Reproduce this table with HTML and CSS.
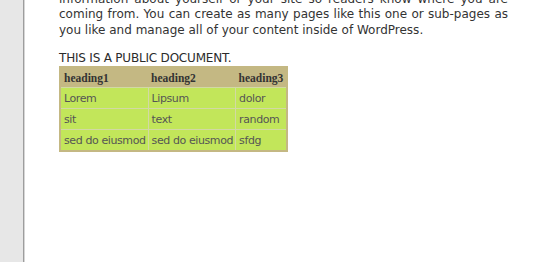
FILE: index.html
```html
<!DOCTYPE html>
<html>
<head>
	<title>Public document</title>
	<link rel="stylesheet" href="styles.css">
</head>
<body>
	<div class="sidebar"></div>
	<div class="content">
		<p class="intro">This is an example of a WordPress page, you could edit this to put information about yourself or your site so readers know where you are coming from. You can create as many pages like this one or sub-pages as you like and manage all of your content inside of WordPress.</p>
		<p class="notice">THIS IS A PUBLIC DOCUMENT.</p>
		<table class="data">
			<tr>
				<th>heading1</th>
				<th>heading2</th>
				<th>heading3</th>
			</tr>
			<tr>
				<td>Lorem</td>
				<td>Lipsum</td>
				<td>dolor</td>
			</tr>
			<tr>
				<td>sit</td>
				<td>text</td>
				<td>random</td>
			</tr>
			<tr>
				<td>sed do eiusmod</td>
				<td>sed do eiusmod</td>
				<td>sfdg</td>
			</tr>
		</table>
	</div>
</body>
</html>
```

FILE: styles.css
```css
html, body {
	height: 100%;
}
body {
	margin: 0;
	display: flex;
	background-color: #fff;
	font-family: "DejaVu Sans", Verdana, sans-serif;
	color: #333;
	overflow: hidden;
}
.sidebar {
	width: 23px;
	flex-shrink: 0;
	background-color: #e7e7e7;
	border-right: 1px solid #9d9d9d;
	box-shadow: 1px 0 0 #d6d6d6;
}
.content {
	width: 449px;
	padding-left: 35px;
	margin-top: -24px;
}
.intro {
	margin: 0 0 13px;
	font-size: 12px;
	line-height: 15.5px;
	text-align: justify;
}
.notice {
	margin: 0;
	font-size: 12px;
	line-height: 15px;
	letter-spacing: -0.2px;
	color: #2b2b2b;
}

/* tabla */
.data {
	border: 2px solid #c4b883;
	border-collapse: collapse;
	background-color: #c4b883;
	font-size: 11px;
}
.data th {
	font-family: "Liberation Serif", Georgia, serif;
	font-size: 11.5px;
	font-weight: bold;
	text-align: left;
	color: #333;
	height: 19px;
	padding: 0 3px 0 3px;
}
.data td {
	background-color: #c2e65a;
	border: 1px solid #d2d9a4;
	color: #555;
	letter-spacing: -0.4px;
	height: 20px;
	padding: 0 2px 0 3px;
}
```
